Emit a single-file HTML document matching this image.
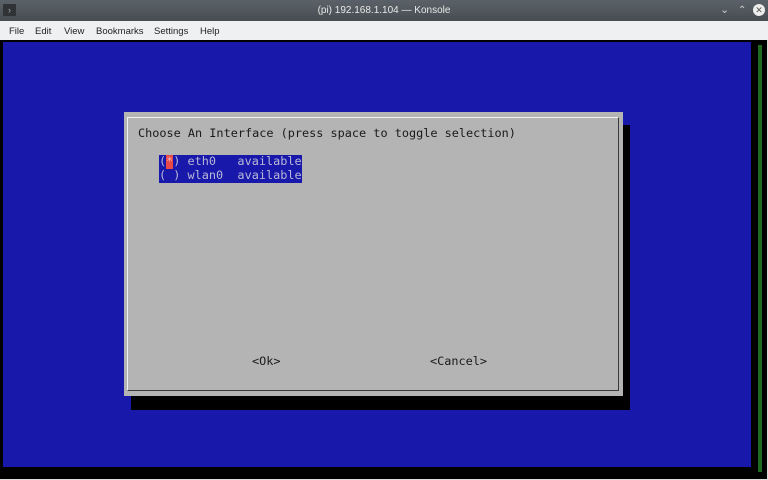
<!DOCTYPE html>
<html><head><style>
*{margin:0;padding:0;box-sizing:border-box}
body{width:768px;height:480px;overflow:hidden;background:#dcdcdc;position:relative;font-family:"Liberation Sans",sans-serif}
.a{position:absolute}
.m{font-family:"DejaVu Sans Mono","Liberation Mono",monospace;font-size:11.85px;line-height:14px;white-space:pre;color:#1a1a1a}
</style></head><body>
<div class="a" style="left:0;top:0;width:768px;height:21px;background:linear-gradient(#5a6168,#474d53)"></div>
<div class="a" style="left:3px;top:4px;width:13px;height:12px;background:#2f3336;border-radius:1px;color:#aaa;font-size:9px;line-height:12px;text-align:center">›</div>
<div class="a" style="left:0;top:5px;width:768px;text-align:center;color:#e8e8e8;font-size:10px">(pi) 192.168.1.104 — Konsole</div>
<div class="a" style="left:720px;top:3px;color:#ccc;font-size:11px">⌄</div>
<div class="a" style="left:738px;top:5px;color:#ccc;font-size:10px">⌃</div>
<div class="a" style="left:753px;top:4px;width:12px;height:12px;border-radius:6px;background:#eee;color:#555;font-size:9px;line-height:12px;text-align:center">✕</div>
<div class="a" style="left:0;top:21px;width:768px;height:19px;background:#eff0f1;font-size:9.5px;color:#222">
<span class="a" style="left:9px;top:5px">File</span><span class="a" style="left:35px;top:5px">Edit</span><span class="a" style="left:64px;top:5px">View</span><span class="a" style="left:96px;top:5px">Bookmarks</span><span class="a" style="left:154px;top:5px">Settings</span><span class="a" style="left:200px;top:5px">Help</span></div>
<div class="a" style="left:0;top:40px;width:767px;height:439px;background:#000"></div>
<div class="a" style="left:3px;top:42px;width:748px;height:425px;background:#1818aa"></div>
<div class="a" style="left:758px;top:45px;width:4px;height:427px;background:#1d6b1d"></div>
<div class="a" style="left:131px;top:125px;width:499px;height:285px;background:#000"></div>
<div class="a" style="left:124px;top:112px;width:499px;height:284px;background:#b4b4b4"></div>
<div class="a" style="left:127px;top:117px;width:492px;height:274px;border:1px solid #f0f0f0;border-right-color:#3a3a3a;border-bottom-color:#3a3a3a"></div>
<div class="a m" style="left:138px;top:126px">Choose An Interface (press space to toggle selection)</div>
<div class="a" style="left:159px;top:155px;width:143px;height:28px;background:#1818aa"></div>
<div class="a" style="left:166px;top:155px;width:7px;height:14px;background:#e84848"></div>
<div class="a m" style="left:159px;top:154px;color:#b8b8d8">( ) eth0   available
( ) wlan0  available</div>
<div class="a m" style="left:166px;top:154px;color:#f0b0b0">*</div>
<div class="a m" style="left:252px;top:354px">&lt;Ok&gt;</div>
<div class="a m" style="left:430px;top:354px">&lt;Cancel&gt;</div>
</body></html>
